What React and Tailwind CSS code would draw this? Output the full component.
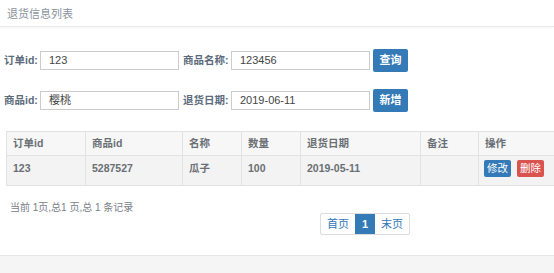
import React from 'react';

const font = { fontFamily: '"Liberation Sans", "Noto Sans CJK SC", sans-serif' };

function Field({ label, value, labelW, inputW }) {
  return (
    <div className="flex items-center">
      <span className="text-[10.5px] font-bold text-[#5b6b7c] mr-[3px] whitespace-nowrap" style={{ width: labelW }}>{label}</span>
      <div className="h-[19px] border border-[#ccc] bg-white flex items-center px-[8px] text-[11px] text-[#444]" style={{ width: inputW }}>
        {value}
      </div>
    </div>
  );
}

const cols = [
  { name: '订单id', w: 79, v: '123' },
  { name: '商品id', w: 97, v: '5287527' },
  { name: '名称', w: 59, v: '瓜子' },
  { name: '数量', w: 59, v: '100' },
  { name: '退货日期', w: 120, v: '2019-05-11' },
  { name: '备注', w: 58, v: '' },
];

export default function App() {
  return (
    <div className="w-[554px] h-[273px] bg-white flex flex-col overflow-hidden" style={font}>
      <div className="h-[27px] border-b border-[#e8e8e8] shadow-[0_1px_2px_rgba(0,0,0,0.04)] pl-[7px] pt-[6px] text-[11px] text-[#8a929c]">
        退货信息列表
      </div>

      <div className="pl-[4px] pt-[22px] flex flex-col gap-[17px]">
        <div className="flex items-center">
          <Field label="订单id:" value="123" labelW={33} inputW={139} />
          <div className="w-[4px]" />
          <Field label="商品名称:" value="123456" labelW={45} inputW={139} />
          <button className="ml-[3px] h-[23px] w-[35px] rounded-[2px] bg-[#337ab7] text-white text-[11px] font-bold">查询</button>
        </div>
        <div className="flex items-center">
          <Field label="商品id:" value="樱桃" labelW={33} inputW={139} />
          <div className="w-[4px]" />
          <Field label="退货日期:" value="2019-06-11" labelW={45} inputW={139} />
          <button className="ml-[3px] h-[23px] w-[35px] rounded-[2px] bg-[#337ab7] text-white text-[11px] font-bold">新增</button>
        </div>
      </div>

      <div className="ml-[6px] mt-[19px] w-[560px] border border-[#e2e2e2] text-[10.5px] font-bold text-[#6a6f75]">
        <div className="flex h-[24px] bg-[#f7f7f7] border-b border-[#e2e2e2]">
          {cols.map((c, i) => (
            <div key={i} className="border-r border-[#e2e2e2] pl-[6px] flex items-center" style={{ width: c.w }}>{c.name}</div>
          ))}
          <div className="flex-1 pl-[6px] flex items-center">操作</div>
        </div>
        <div className="flex h-[29px] bg-[#f3f3f3]">
          {cols.map((c, i) => (
            <div key={i} className="border-r border-[#e2e2e2] pl-[6px] pt-[5px]" style={{ width: c.w }}>{c.v}</div>
          ))}
          <div className="flex-1 pl-[5px] pt-[4px] flex gap-[6px] items-start">
            <span className="bg-[#337ab7] text-white font-normal px-[3px] h-[17px] leading-[17px] rounded-[2px]">修改</span>
            <span className="bg-[#d9534f] text-white font-normal px-[3px] h-[17px] leading-[17px] rounded-[2px]">删除</span>
          </div>
        </div>
      </div>

      <div className="pl-[10px] mt-[16px] text-[10px] text-[#7a8088] leading-[12px]">当前 1页,总1 页,总 1 条记录</div>

      <div className="ml-[320px] mt-[-1px] flex h-[22px] text-[11px] border border-[#ddd] w-fit rounded-[2px]">
        <span className="px-[6px] flex items-center text-[#337ab7]">首页</span>
        <span className="w-[20px] flex items-center justify-center bg-[#337ab7] text-white font-bold">1</span>
        <span className="px-[6px] flex items-center text-[#337ab7]">末页</span>
      </div>

      <div className="mt-auto h-[18px] bg-[#f5f5f5] border-t border-[#e5e5e5]" />
    </div>
  );
}
